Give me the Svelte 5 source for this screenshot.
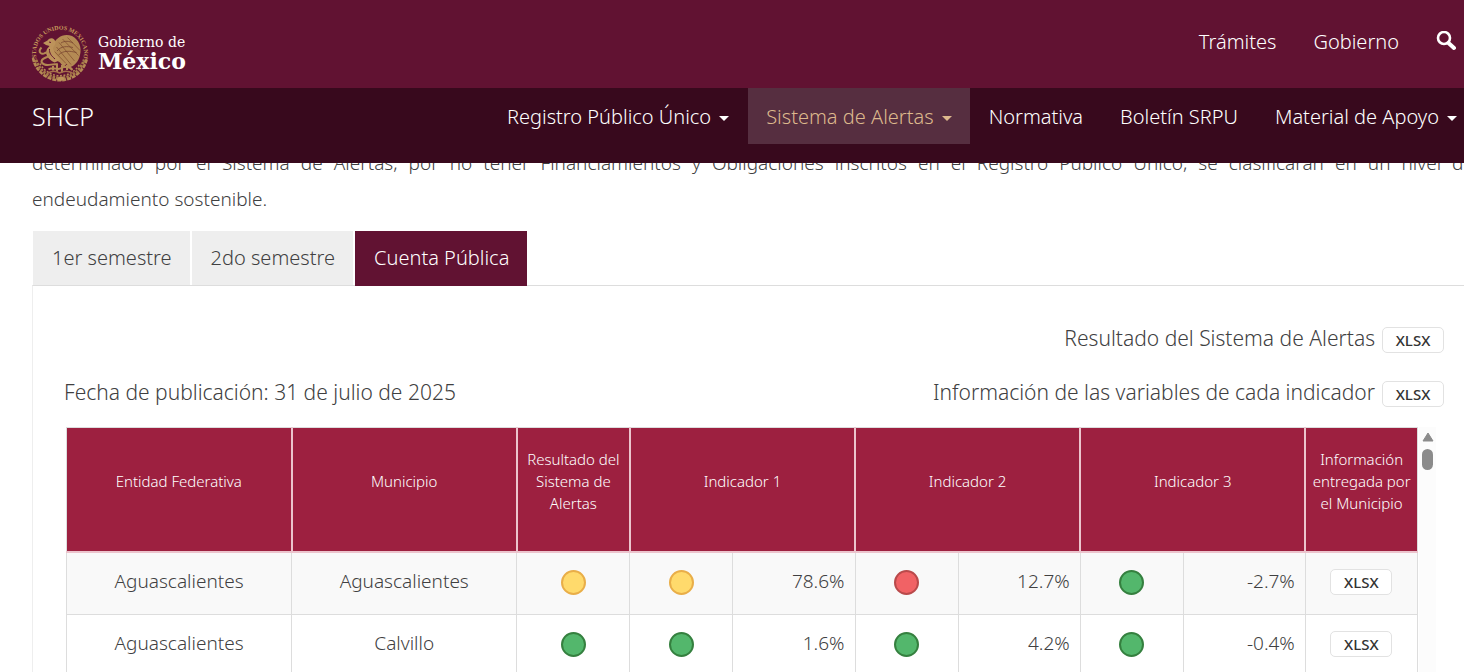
<script lang="ts">
    type Level = "ok" | "warn" | "bad";

    const menu = [
        { label: "Registro Público Único", dropdown: true },
        { label: "Sistema de Alertas", dropdown: true },
        { label: "Normativa", dropdown: false },
        { label: "Boletín SRPU", dropdown: false },
        { label: "Material de Apoyo", dropdown: true },
    ];
    const activeMenu = "Sistema de Alertas";

    const tabs = ["1er semestre", "2do semestre", "Cuenta Pública"];
    let activeTab = $state("Cuenta Pública");

    const levelNames = { ok: "Sostenible", warn: "En observación", bad: "Elevado" };

    const rows: {
        state: string;
        town: string;
        result: Level;
        indicators: { level: Level; value: string }[];
    }[] = [
        {
            state: "Aguascalientes",
            town: "Aguascalientes",
            result: "warn",
            indicators: [
                { level: "warn", value: "78.6%" },
                { level: "bad", value: "12.7%" },
                { level: "ok", value: "-2.7%" },
            ],
        },
        {
            state: "Aguascalientes",
            town: "Calvillo",
            result: "ok",
            indicators: [
                { level: "ok", value: "1.6%" },
                { level: "ok", value: "4.2%" },
                { level: "ok", value: "-0.4%" },
            ],
        },
    ];
</script>

<div class="page">
    <header>
        <div class="gov-bar">
            <a class="brand" href="#inicio">
                <svg class="seal" viewBox="0 0 116 116" aria-hidden="true">
                    <defs>
                        <path id="seal-arc" d="M12 73 A48 48 0 1 1 104 73" />
                    </defs>
                    <text class="seal-text">
                        <textPath href="#seal-arc" startOffset="50%" text-anchor="middle">ESTADOS UNIDOS MEXICANOS</textPath>
                    </text>
                    <!-- wreath -->
                    <path d="M4 68 A55 55 0 0 0 112 68" fill="none" stroke="#b48a54" stroke-width="5" stroke-dasharray="8 2" />
                    <path d="M10 72 A50 50 0 0 0 106 72" fill="none" stroke="#a67b49" stroke-width="6" stroke-dasharray="5 2" />
                    <path d="M18 79 A45 45 0 0 0 98 79" fill="none" stroke="#b48a54" stroke-width="3" stroke-dasharray="4 3" />
                    <!-- wings and tail -->
                    <path d="M43 45 C48 27 66 17 82 24 C96 31 102 47 98 62 C95 76 86 84 77 87 L71 80 L65 86 L58 77 C49 72 43 62 43 45Z" fill="#b48a54" />
                    <path d="M56 37 L87 74 M63 30 L95 63 M73 27 L98 53 M51 46 L80 81 M47 55 L70 79" stroke="#84502f" stroke-width="1.5" />
                    <path d="M52 54 C60 44 72 44 84 47 M55 62 C65 52 78 54 91 57 M60 38 C68 33 76 34 84 38" fill="none" stroke="#74402f" stroke-width="1.5" />
                    <!-- head, neck and snake -->
                    <path d="M30 42 L24 38 L33 33 C39 25 49 29 49 38 C49 43 42 46 45 52 C48 61 55 66 59 72 L47 77 C34 70 27 61 32 50 L37 44Z" fill="#bd935b" />
                    <path d="M21 47 C12 57 22 62 28 58 C38 53 41 62 32 66 C20 70 17 77 27 81 C36 85 43 78 53 81" fill="none" stroke="#b48a54" stroke-width="4" />
                    <path d="M36 36 L40 37 M37 50 C36 58 41 64 48 70" fill="none" stroke="#611232" stroke-width="2" />
                    <!-- cactus and stone -->
                    <path d="M44 84 V93 M52 79 V96 M62 82 V97 M72 82 V92 M35 91 C46 84 52 94 61 88 C70 83 77 85 83 92" fill="none" stroke="#b48a54" stroke-width="4" />
                    <path d="M34 98 Q46 91 57 98 Q70 91 83 98" fill="none" stroke="#a66f4b" stroke-width="3" />
                    <path d="M55 106 L51 112 L60 114 L68 110 L63 105Z" fill="#bd935b" />
                </svg>
                <span class="brand-name">
                    <span class="brand-top">Gobierno de</span>
                    <span class="brand-main">México</span>
                </span>
            </a>
            <nav class="gov-links" aria-label="Gobierno">
                <a href="#tramites">Trámites</a>
                <a href="#gobierno">Gobierno</a>
                <a href="#buscar" class="search" aria-label="Buscar">
                    <svg viewBox="0 0 20 20" aria-hidden="true">
                        <circle cx="8" cy="7" r="6" fill="none" stroke="#fff" stroke-width="2.6" />
                        <path d="M12.5 12 L18 17" stroke="#fff" stroke-width="4" stroke-linecap="round" />
                    </svg>
                </a>
            </nav>
        </div>

        <div class="sub-bar">
            <a class="site" href="#shcp">SHCP</a>
            <nav class="menu" aria-label="SHCP">
                {#each menu as item}
                    <a href="#menu" class:active={item.label === activeMenu}>
                        {item.label}
                        {#if item.dropdown}<span class="caret"></span>{/if}
                    </a>
                {/each}
            </nav>
        </div>
    </header>

    <main>
        <p class="intro">
            determinado por el Sistema de Alertas, por no tener Financiamientos y Obligaciones inscritos
            en el Registro Público Único, se clasificarán en un nivel de endeudamiento sostenible.
        </p>

        <div class="tabs" role="tablist">
            {#each tabs as tab}
                <button
                    role="tab"
                    aria-selected={tab === activeTab}
                    class:selected={tab === activeTab}
                    onclick={() => (activeTab = tab)}
                >{tab}</button>
            {/each}
        </div>

        <section class="panel">
            <div class="line">
                <span class="download">Resultado del Sistema de Alertas <a class="xlsx" href="#resultado">XLSX</a></span>
            </div>
            <div class="line">
                <span class="date">Fecha de publicación: 31 de julio de 2025</span>
                <span class="download">Información de las variables de cada indicador <a class="xlsx" href="#variables">XLSX</a></span>
            </div>

            <div class="scroller">
                <table>
                    <colgroup>
                        <col class="c-name" />
                        <col class="c-name" />
                        <col class="c-result" />
                        <col class="c-dot" />
                        <col class="c-value" />
                        <col class="c-dot" />
                        <col class="c-value" />
                        <col class="c-dot" />
                        <col class="c-value" />
                        <col class="c-file" />
                    </colgroup>
                    <thead>
                        <tr>
                            <th>Entidad Federativa</th>
                            <th>Municipio</th>
                            <th>Resultado del Sistema de Alertas</th>
                            <th colspan="2">Indicador 1</th>
                            <th colspan="2">Indicador 2</th>
                            <th colspan="2">Indicador 3</th>
                            <th>Información entregada por el Municipio</th>
                        </tr>
                    </thead>
                    <tbody>
                        {#each rows as row}
                            <tr>
                                <td>{row.state}</td>
                                <td>{row.town}</td>
                                <td><span class="dot {row.result}" role="img" aria-label={levelNames[row.result]}></span></td>
                                {#each row.indicators as ind}
                                    <td><span class="dot {ind.level}" role="img" aria-label={levelNames[ind.level]}></span></td>
                                    <td class="value">{ind.value}</td>
                                {/each}
                                <td><a class="xlsx" href="#municipio">XLSX</a></td>
                            </tr>
                        {/each}
                    </tbody>
                </table>
                <div class="track" aria-hidden="true">
                    <svg viewBox="0 0 12 10">
                        <path d="M6 1 L11 9 H1Z" fill="#8b8b8b" stroke="#8b8b8b" stroke-linejoin="round" />
                    </svg>
                    <div class="thumb"></div>
                </div>
            </div>
        </section>
    </main>
</div>

<style>
    :global(body) {
        background: #fff;
    }

    .page {
        overflow: clip;
        height: 100vh;
        color: #404041;
        font-family: "Noto Sans", "Open Sans", sans-serif;
        font-size: 20px;
        font-weight: 300;
    }

    a {
        color: inherit;
        text-decoration: none;
    }

    header {
        position: sticky;
        top: 0;
        z-index: 1;
        color: #fff;
    }

    .gov-bar {
        display: flex;
        align-items: center;
        justify-content: space-between;
        box-sizing: border-box;
        height: 88px;
        padding: 0 8px 0 31px;
        background: #611232;
    }

    .brand {
        display: flex;
        align-items: center;
        gap: 9px;
        padding-top: 18px;
    }

    .seal {
        width: 58px;
        height: 58px;
    }

    .seal-text {
        fill: #c79b5b;
        font-family: "Liberation Serif", serif;
        font-size: 12px;
        font-weight: 700;
    }

    .brand-name {
        display: flex;
        flex-direction: column;
        font-family: "DejaVu Serif", serif;
    }

    .brand-top {
        font-size: 14px;
        font-weight: 400;
        line-height: 16px;
    }

    .brand-main {
        font-size: 22px;
        font-weight: 700;
        line-height: 22px;
    }

    .gov-links {
        display: flex;
        align-items: center;
        gap: 37px;
        margin-bottom: 6px;
    }

    .search svg {
        display: block;
        width: 20px;
        height: 20px;
    }

    .sub-bar {
        display: flex;
        align-items: flex-start;
        justify-content: space-between;
        height: 75px;
        padding-left: 32px;
        background: #38091d;
    }

    .site {
        font-size: 25px;
        line-height: 57px;
    }

    .menu {
        display: flex;
        gap: 1px;
        margin-right: -11px;
    }

    .menu a {
        display: flex;
        align-items: center;
        gap: 8px;
        height: 56px;
        padding: 0 18px;
    }

    .menu a.active {
        background: #562e40;
        color: #ddb98d;
    }

    .caret {
        border: solid transparent;
        border-width: 5px 5px 0;
        border-top-color: currentColor;
        margin-top: 4px;
    }

    main {
        margin: -18px -10px 0 32px;
    }

    .intro {
        margin: 0 0 14px;
        font-size: 19px;
        line-height: 36px;
        text-align: justify;
    }

    .tabs {
        display: flex;
        gap: 2px;
        padding-left: 1px;
    }

    .tabs button {
        height: 54px;
        padding: 0 18px 2px 19px;
        border: 0;
        background: #eee;
        color: #404041;
        font: inherit;
        cursor: pointer;
    }

    .tabs button.selected {
        height: 55px;
        margin-bottom: -1px;
        z-index: 1;
        background: #611232;
        color: #fff;
    }

    .panel {
        padding: 25px 29px 0 31px;
        border: 1px solid #ddd;
        border-left-color: #eee;
    }

    .line {
        display: flex;
        align-items: center;
        justify-content: flex-end;
        height: 54px;
        font-size: 21px;
    }

    .date {
        flex: 1;
    }

    .download {
        display: flex;
        align-items: baseline;
        gap: 7px;
    }

    .xlsx {
        display: inline-block;
        box-sizing: border-box;
        width: 62px;
        height: 26px;
        border: 1px solid #e2e2e2;
        border-radius: 5px;
        background: #fff;
        color: #333;
        font-size: 15px;
        font-weight: 500;
        line-height: 25px;
        text-align: center;
        vertical-align: middle;
    }

    .scroller {
        display: flex;
        gap: 1px;
        margin: 8px 8px 0 2px;
    }

    table {
        flex: 1;
        border-collapse: collapse;
        table-layout: fixed;
    }

    .c-name {
        width: 225px;
    }

    .c-result {
        width: 113px;
    }

    .c-dot {
        width: 103px;
    }

    .c-value {
        width: 122px;
    }

    .c-file {
        width: 112px;
    }

    th {
        height: 105px;
        padding: 0 4px 18px;
        border: 2px solid #ecc4cd;
        border-top: 1px solid #ddd;
        background: #9d2040;
        color: #fff;
        font-size: 15px;
        font-weight: 300;
        line-height: 22px;
    }

    th:first-child {
        border-left: 1px solid #ddd;
    }

    th:last-child {
        border-right: 1px solid #ddd;
    }

    td {
        height: 56px;
        padding: 0 0 5px;
        border: 1px solid #ddd;
        font-size: 19px;
        text-align: center;
    }

    tbody tr:nth-child(odd) {
        background: #f9f9f9;
    }

    .value {
        padding-right: 10px;
        text-align: right;
    }

    .dot {
        display: inline-block;
        box-sizing: border-box;
        width: 25px;
        height: 25px;
        border: 2px solid;
        border-radius: 50%;
        vertical-align: middle;
    }

    .ok {
        border-color: #35803f;
        background: #53b76c;
    }

    .warn {
        border-color: #e9ae48;
        background: #ffda6c;
    }

    .bad {
        border-color: #b94a4b;
        background: #f16265;
    }

    .track {
        display: flex;
        flex-direction: column;
        align-items: center;
        gap: 7px;
        width: 17px;
        padding-top: 5px;
        background: #fcfcfc;
    }

    .track svg {
        width: 12px;
        height: 10px;
    }

    .thumb {
        width: 11px;
        height: 21px;
        border-radius: 6px;
        background: #8b8b8b;
    }
</style>
